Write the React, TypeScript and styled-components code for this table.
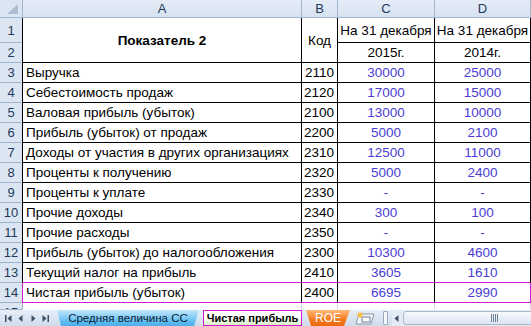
import React from 'react';
import styled, { createGlobalStyle, css } from 'styled-components';

const GlobalStyle = createGlobalStyle`
  html, body { margin: 0; padding: 0; background: #fff; }
  body { font-family: "Liberation Sans", Arial, sans-serif; }
`;

const HEAD_BG = '#dce6f2';
const HEAD_LINE = '#9eb6ce';
const GRID_LINE = '#d0d7e5';
const MAGENTA = '#d21bd2';
const BLUE = '#4b3dd6';

const Window = styled.div`
  width: 531px;
  height: 326px;
  overflow: hidden;
  display: flex;
  flex-direction: column;
  background: #fff;
`;

const Grid = styled.div`
  flex: none;
  display: grid;
  grid-template-columns: 22px 280px 36px 97px 96px;
  grid-template-rows: 18px 25px 20px repeat(12, 20px) 7px;
`;

const Corner = styled.div`
  box-sizing: border-box;
  background: ${HEAD_BG};
  border-bottom: 1px solid ${HEAD_LINE};
  display: flex;
  align-items: flex-end;
  justify-content: flex-end;
  padding: 0 4px 3px 0;
`;

const ColHead = styled.div<{ $first?: boolean }>`
  box-sizing: border-box;
  background: linear-gradient(#e4ecf7, #d7e2f0);
  border-bottom: 1px solid ${HEAD_LINE};
  border-right: 1px solid ${HEAD_LINE};
  ${(p) => p.$first && css`border-left: 1px solid ${HEAD_LINE};`}
  display: flex;
  align-items: center;
  justify-content: center;
  font-size: 13px;
  color: #1e395b;
`;

const RowHead = styled.div<{ $clip?: boolean }>`
  box-sizing: border-box;
  background: ${HEAD_BG};
  border-bottom: 1px solid ${HEAD_LINE};
  display: flex;
  align-items: ${(p) => (p.$clip ? 'flex-start' : 'center')};
  justify-content: center;
  padding-top: ${(p) => (p.$clip ? '3px' : '1px')};
  font-size: 13px;
  line-height: 14px;
  color: #1e395b;
  overflow: hidden;
`;

type Align = 'left' | 'center' | 'right';

const Cell = styled.div<{
  $align?: Align;
  $bold?: boolean;
  $blue?: boolean;
  $bb?: string;
  $br?: string;
  $bl?: string;
  $span?: number;
}>`
  box-sizing: border-box;
  display: flex;
  align-items: center;
  justify-content: ${(p) =>
    p.$align === 'center' ? 'center' : p.$align === 'right' ? 'flex-end' : 'flex-start'};
  padding: 1px 3px 0 3px;
  font-size: 13.5px;
  line-height: 14px;
  white-space: nowrap;
  overflow: hidden;
  color: ${(p) => (p.$blue ? BLUE : '#000')};
  font-weight: ${(p) => (p.$bold ? 700 : 400)};
  border-bottom: 1px solid ${(p) => p.$bb ?? '#000'};
  border-right: 1px solid ${(p) => p.$br ?? '#000'};
  ${(p) => p.$bl && css`border-left: 1px solid ${p.$bl};`}
  ${(p) => p.$span && css`grid-row: span ${p.$span};`}
`;

/* ---------- sheet tab bar ---------- */

const TabBar = styled.div`
  flex: none;
  height: 16px;
  display: flex;
  align-items: stretch;
  background: linear-gradient(#e6eef8, #cfdcec);
`;

const Nav = styled.div`
  width: 54px;
  display: flex;
  align-items: center;
  justify-content: space-around;
  padding: 0 2px;
  box-sizing: border-box;
`;

const Tab = styled.div<{ $kind: 'blue' | 'active' | 'orange' }>`
  box-sizing: border-box;
  display: flex;
  align-items: center;
  justify-content: center;
  font-size: 11.5px;
  line-height: 13px;
  white-space: nowrap;
  overflow: hidden;
  ${(p) =>
    p.$kind === 'blue' &&
    css`
      width: 142px;
      margin-left: 3px;
      color: #0b1b33;
      background: linear-gradient(#c4e8fd, #62bdf0 70%, #4aaee9);
      clip-path: polygon(0 0, 100% 0, calc(100% - 5px) 100%, 4px 100%);
    `}
  ${(p) =>
    p.$kind === 'active' &&
    css`
      width: 99px;
      margin-left: 4px;
      font-weight: 700;
      font-size: 11px;
      color: #000;
      border: 1px solid ${MAGENTA};
      background: linear-gradient(#ffffff 40%, #d9efc4);
    `}
  ${(p) =>
    p.$kind === 'orange' &&
    css`
      width: 44px;
      margin-left: 4px;
      font-size: 12px;
      color: #fff;
      background: linear-gradient(#ffb978, #f47a1f 60%, #ea6a0e);
      clip-path: polygon(0 0, 100% 0, calc(100% - 6px) 100%, 5px 100%);
    `}
`;

const InsertTab = styled.div`
  width: 30px;
  display: flex;
  align-items: center;
  justify-content: center;
`;

const Splitter = styled.div`
  width: 3px;
  height: 12px;
  align-self: center;
  margin: 0 4px 0 3px;
  border: 1px solid #9aa9bd;
  border-radius: 1px;
  background: #f4f7fb;
`;

const Scroll = styled.div`
  flex: 1;
  display: flex;
  align-items: center;
  overflow: hidden;
  background: #e3ebf5;
`;

const ArrowBtn = styled.div`
  width: 13px;
  display: flex;
  align-items: center;
  justify-content: center;
`;

const Thumb = styled.div`
  flex: none;
  width: 190px;
  height: 14px;
  box-sizing: border-box;
  margin-left: 2px;
  border: 1px solid #a7b8cf;
  border-radius: 3px;
  background: linear-gradient(#f7f9fc, #dbe5f2);
  display: flex;
  align-items: center;
  padding-left: 87px;
`;

const Grip = () => (
  <svg width="9" height="8" viewBox="0 0 9 8">
    {[0.5, 2.5, 4.5, 6.5].map((x) => (
      <line key={x} x1={x} y1="0" x2={x} y2="8" stroke="#6f7f95" strokeWidth="1" />
    ))}
  </svg>
);

const NavIcon = ({ dir, bar }: { dir: 'l' | 'r'; bar?: boolean }) => (
  <svg width="9" height="9" viewBox="0 0 9 9">
    {dir === 'l' ? (
      <>
        {bar && <rect x="1" y="1" width="1.5" height="7" fill="#3f4f66" />}
        <polygon points={bar ? '7.5,1 7.5,8 3.5,4.5' : '6.5,1 6.5,8 2.5,4.5'} fill="#3f4f66" />
      </>
    ) : (
      <>
        {bar && <rect x="6.5" y="1" width="1.5" height="7" fill="#3f4f66" />}
        <polygon points={bar ? '1.5,1 1.5,8 5.5,4.5' : '2.5,1 2.5,8 6.5,4.5'} fill="#3f4f66" />
      </>
    )}
  </svg>
);

const InsertIcon = () => (
  <svg width="24" height="14" viewBox="0 0 24 14">
    <path d="M3 13 L6 3 L21 3 L18 13 Z" fill="#f4f7fb" stroke="#8a98ab" strokeWidth="1" />
    <rect x="9" y="6" width="8" height="5" fill="#fff" stroke="#6d7c90" strokeWidth="1" />
    <circle cx="7" cy="4" r="2.2" fill="#f5b638" />
    <path d="M7 0.5 L7 7.5 M3.5 4 L10.5 4 M4.6 1.6 L9.4 6.4 M9.4 1.6 L4.6 6.4" stroke="#f7c14a" strokeWidth="0.8" />
  </svg>
);

type Row = [number, string, string, string, string];

const rows: Row[] = [
  [3, 'Выручка', '2110', '30000', '25000'],
  [4, 'Себестоимость продаж', '2120', '17000', '15000'],
  [5, 'Валовая прибыль (убыток)', '2100', '13000', '10000'],
  [6, 'Прибыль (убыток) от продаж', '2200', '5000', '2100'],
  [7, 'Доходы от участия в других организациях', '2310', '12500', '11000'],
  [8, 'Проценты к получению', '2320', '5000', '2400'],
  [9, 'Проценты к уплате', '2330', '-', '-'],
  [10, 'Прочие доходы', '2340', '300', '100'],
  [11, 'Прочие расходы', '2350', '-', '-'],
  [12, 'Прибыль (убыток) до налогообложения', '2300', '10300', '4600'],
  [13, 'Текущий налог на прибыль', '2410', '3605', '1610'],
  [14, 'Чистая прибыль (убыток)', '2400', '6695', '2990'],
];

export default function App() {
  return (
    <Window>
      <GlobalStyle />
      <Grid>
        <Corner>
          <svg width="11" height="10" viewBox="0 0 11 10">
            <polygon points="11,0 11,10 0,10" fill="#aebdd2" />
          </svg>
        </Corner>
        <ColHead $first>A</ColHead>
        <ColHead>B</ColHead>
        <ColHead>C</ColHead>
        <ColHead>D</ColHead>

        <RowHead>1</RowHead>
        <Cell $span={2} $align="center" $bold $bl="#000">
          Показатель 2
        </Cell>
        <Cell $span={2} $align="center">
          Код
        </Cell>
        <Cell $align="center">На 31 декабря</Cell>
        <Cell $align="center">На 31 декабря</Cell>

        <RowHead>2</RowHead>
        <Cell $align="center">2015г.</Cell>
        <Cell $align="center">2014г.</Cell>

        {rows.map(([n, name, code, c, d]) => {
          const last = n === 14;
          const bb = n >= 13 ? MAGENTA : '#000';
          return (
            <React.Fragment key={n}>
              <RowHead>{n}</RowHead>
              <Cell $bl={last ? MAGENTA : '#000'} $bb={bb}>
                {name}
              </Cell>
              <Cell $align="right" $bb={bb}>
                {code}
              </Cell>
              <Cell $align="center" $blue $bb={bb}>
                {c}
              </Cell>
              <Cell $align="center" $blue $bb={bb} $br={last ? MAGENTA : '#000'}>
                {d}
              </Cell>
            </React.Fragment>
          );
        })}

        <RowHead $clip>15</RowHead>
        <Cell $bl={HEAD_LINE} $br={GRID_LINE} $bb="transparent" />
        <Cell $br={GRID_LINE} $bb="transparent" />
        <Cell $br={GRID_LINE} $bb="transparent" />
        <Cell $br={GRID_LINE} $bb="transparent" />
      </Grid>

      <TabBar>
        <Nav>
          <NavIcon dir="l" bar />
          <NavIcon dir="l" />
          <NavIcon dir="r" />
          <NavIcon dir="r" bar />
        </Nav>
        <Tab $kind="blue">Средняя величина СС</Tab>
        <Tab $kind="active">Чистая прибыль</Tab>
        <Tab $kind="orange">ROE</Tab>
        <InsertTab>
          <InsertIcon />
        </InsertTab>
        <Splitter />
        <Scroll>
          <ArrowBtn>
            <NavIcon dir="l" />
          </ArrowBtn>
          <Thumb>
            <Grip />
          </Thumb>
        </Scroll>
      </TabBar>
    </Window>
  );
}
